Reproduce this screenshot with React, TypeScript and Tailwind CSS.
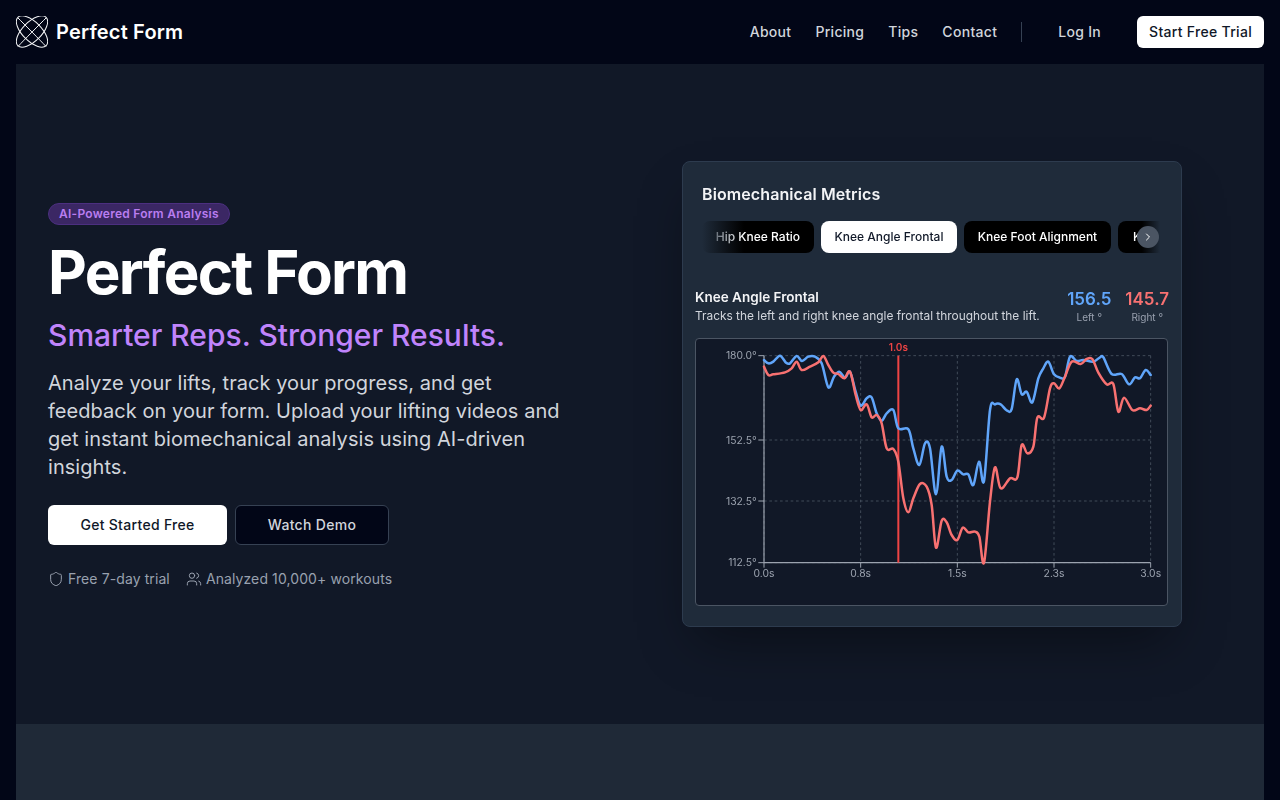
import { Shield, Users, ChevronRight } from "lucide-react";

const blueLine = [
  [222, 75], [235, 85], [250, 80], [270, 62], [288, 83], [300, 85], [320, 63], [336, 78], [355, 65], [375, 65], [395, 85],
  [415, 157], [432, 125], [448, 110], [465, 128], [480, 110], [497, 170], [512, 212], [530, 190], [545, 187], [560, 235],
  [575, 257], [590, 235], [610, 225], [625, 280], [655, 283], [670, 340], [688, 390], [705, 325], [720, 340], [738, 478],
  [755, 335], [770, 425], [785, 435], [802, 407], [820, 418], [835, 418], [850, 450], [867, 380], [882, 438], [900, 225],
  [915, 208], [932, 208], [950, 226], [965, 222], [980, 133], [995, 178], [1010, 170], [1027, 202], [1045, 130], [1060, 100],
  [1075, 80], [1092, 118], [1110, 128], [1125, 125], [1140, 65], [1160, 78], [1180, 75], [1210, 80], [1230, 67], [1240, 67],
  [1265, 117], [1295, 117], [1317, 148], [1335, 127], [1350, 130], [1367, 105], [1382, 120],
];

const redLine = [
  [222, 95], [235, 120], [250, 118], [285, 112], [305, 100], [320, 80], [335, 105], [360, 95], [385, 82], [400, 63], [415, 90],
  [430, 113], [445, 117], [463, 130], [480, 110], [497, 180], [512, 225], [530, 208], [545, 247], [560, 240], [575, 265],
  [590, 340], [610, 342], [625, 380], [640, 490], [655, 532], [670, 490], [690, 447], [710, 455], [725, 510], [738, 638],
  [755, 557], [770, 562], [785, 600], [802, 615], [818, 578], [835, 592], [855, 590], [868, 605], [882, 683], [900, 500],
  [915, 397], [932, 460], [960, 430], [982, 427], [995, 330], [1012, 355], [1030, 335], [1042, 248], [1062, 248], [1080, 160],
  [1092, 145], [1108, 160], [1125, 125], [1145, 80], [1172, 87], [1190, 72], [1207, 72], [1225, 113], [1250, 148], [1270, 147],
  [1285, 230], [1302, 188], [1327, 225], [1350, 220], [1370, 225], [1382, 212],
];

// Catmull-Rom through the sampled points, so the lines stay soft like the chart
function smooth(points: number[][]) {
  let d = `M${points[0][0]} ${points[0][1]}`;
  for (let i = 0; i < points.length - 1; i++) {
    const p0 = points[Math.max(i - 1, 0)];
    const p1 = points[i];
    const p2 = points[i + 1];
    const p3 = points[Math.min(i + 2, points.length - 1)];
    const c1x = p1[0] + (p2[0] - p0[0]) / 6;
    const c1y = p1[1] + (p2[1] - p0[1]) / 6;
    const c2x = p2[0] - (p3[0] - p1[0]) / 6;
    const c2y = p2[1] - (p3[1] - p1[1]) / 6;
    d += ` C${c1x} ${c1y} ${c2x} ${c2y} ${p2[0]} ${p2[1]}`;
  }
  return d;
}

const yTicks = [
  { y: 62, label: "180.0°" },
  { y: 315, label: "152.5°" },
  { y: 498, label: "132.5°" },
  { y: 683, label: "112.5°" },
];

const xTicks = [
  { x: 222, label: "0.0s" },
  { x: 512, label: "0.8s" },
  { x: 802, label: "1.5s" },
  { x: 1092, label: "2.3s" },
  { x: 1382, label: "3.0s" },
];

function Logo() {
  return (
    <svg width="32" height="32" viewBox="0 0 32 32" fill="none" stroke="#f3f4f6" strokeWidth="1">
      <ellipse cx="16" cy="15.5" rx="20" ry="9.5" transform="rotate(45 16 15.5)" />
      <ellipse cx="16" cy="15.5" rx="20" ry="9.5" transform="rotate(-45 16 15.5)" />
      <path d="M2 2C8 8 24 24 30 30.5M30 2C24 8 8 24 2 30.5" />
    </svg>
  );
}

function Chart() {
  return (
    <svg className="block h-full w-full" viewBox="18 12 1413 798" fontFamily="Inter, sans-serif">
      {yTicks.map(({ y }) => (
        <line key={y} x1="222" x2="1382" y1={y} y2={y} stroke="#4b5563" strokeWidth="2.5" strokeDasharray="8 8" />
      ))}
      {xTicks.map(({ x }) => (
        <line key={x} x1={x} x2={x} y1="62" y2="683" stroke="#4b5563" strokeWidth="2.5" strokeDasharray="8 8" />
      ))}
      <path d="M222 62V683H1382" fill="none" stroke="#9ca3af" strokeWidth="3.5" />
      {yTicks.map(({ y, label }) => (
        <g key={label}>
          <line x1="205" x2="222" y1={y} y2={y} stroke="#9ca3af" strokeWidth="3" />
          <text x="200" y={y + 11} textAnchor="end" fontSize="31" fill="#9ca3af">
            {label}
          </text>
        </g>
      ))}
      {xTicks.map(({ x, label }) => (
        <g key={label}>
          <line x1={x} x2={x} y1="683" y2="698" stroke="#9ca3af" strokeWidth="3" />
          <text x={x} y="726" textAnchor="middle" fontSize="31" fill="#9ca3af">
            {label}
          </text>
        </g>
      ))}
      <line x1="625" x2="625" y1="62" y2="683" stroke="#ef4444" strokeWidth="6" />
      <text x="625" y="49" textAnchor="middle" fontSize="30" fontWeight="600" fill="#ef4444">
        1.0s
      </text>
      <path d={smooth(blueLine)} fill="none" stroke="#60a5fa" strokeWidth="7.5" strokeLinejoin="round" strokeLinecap="round" />
      <path d={smooth(redLine)} fill="none" stroke="#f87171" strokeWidth="7.5" strokeLinejoin="round" strokeLinecap="round" />
    </svg>
  );
}

function MetricsCard() {
  return (
    <div className="h-[466px] w-[500px] rounded-lg border border-[#2d3b4e] bg-[#1f2b3a] p-3 shadow-2xl shadow-black/40 blur-[0.35px]">
      <h3 className="mt-2 ml-[7px] text-base leading-6 font-semibold tracking-[0.1px] text-gray-100">Biomechanical Metrics</h3>
      <div className="relative mt-[15px] mr-[9px] ml-[7px] flex h-8 gap-[7px] overflow-hidden text-xs font-medium">
        <span className="flex h-8 w-[112px] shrink-0 items-center justify-end rounded-lg bg-black pr-[14px] text-white">Hip Knee Ratio</span>
        <span className="flex h-8 w-[136px] shrink-0 items-center justify-center rounded-lg bg-white text-gray-900">Knee Angle Frontal</span>
        <span className="flex h-8 w-[147px] shrink-0 items-center justify-center rounded-lg bg-black text-white">Knee Foot Alignment</span>
        <span className="flex h-8 w-[147px] shrink-0 items-center rounded-lg bg-black pl-[15px] text-white">Kn</span>
        <span className="absolute inset-y-0 left-0 w-[42px] bg-gradient-to-r from-[#1f2b3a] to-transparent" />
        <span className="absolute inset-y-0 right-0 w-[18px] bg-gradient-to-l from-[#1f2b3a] to-transparent" />
        <span className="absolute top-[5px] right-px flex size-[22px] items-center justify-center rounded-full bg-[#4b5563] text-white">
          <ChevronRight size={12} />
        </span>
      </div>
      <div className="mt-[34px] flex h-[47px] items-start justify-between">
        <div>
          <div className="text-[13.5px] leading-5 font-semibold text-gray-100">Knee Angle Frontal</div>
          <div className="mt-px text-[11.9px] leading-4 text-gray-300">Tracks the left and right knee angle frontal throughout the lift.</div>
        </div>
        <div className="flex gap-[14px] text-center">
          <div>
            <div className="text-[17px] leading-6 font-semibold text-[#60a5fa]">156.5</div>
            <div className="-mt-0.5 text-[10px] leading-4 text-gray-400">Left °</div>
          </div>
          <div>
            <div className="text-[17px] leading-6 font-semibold text-[#f87171]">145.7</div>
            <div className="-mt-0.5 text-[10px] leading-4 text-gray-400">Right °</div>
          </div>
        </div>
      </div>
      <div className="mt-1 h-[268px] w-[473px] rounded border border-[#4b5563] bg-[#111827]">
        <Chart />
      </div>
    </div>
  );
}

export default function App() {
  const navItems = ["About", "Pricing", "Tips", "Contact"];

  return (
    <div className="h-[800px] overflow-hidden bg-[#020617] font-['Inter',sans-serif]">
      <header className="flex h-16 items-center justify-between px-4">
        <a href="#" className="flex items-center gap-2">
          <Logo />
          <span className="text-xl font-semibold tracking-[0.17px] text-white">Perfect Form</span>
        </a>
        <nav className="flex items-center text-sm font-medium tracking-[0.3px] text-gray-300">
          <div className="flex gap-6">
            {navItems.map((item) => (
              <a key={item} href="#">
                {item}
              </a>
            ))}
          </div>
          <div className="mx-6 h-5 w-px bg-gray-700" />
          <a href="#" className="mr-9 ml-3">
            Log In
          </a>
          <a href="#" className="flex h-8 items-center rounded-md bg-white px-3 text-gray-900">
            Start Free Trial
          </a>
        </nav>
      </header>

      <main className="mx-4">
        <section className="grid h-[660px] grid-cols-[584px_600px] items-center bg-[#111827] px-8">
          <div>
            <span className="inline-block rounded-full border border-[#4c2f80] bg-[#3b2764] px-[10px] text-xs leading-5 font-semibold tracking-[0.25px] text-[#b97df0]">
              AI-Powered Form Analysis
            </span>
            <h1 className="mt-[13px] text-6xl leading-[1.15] font-bold tracking-[-1.67px] text-white">Perfect Form</h1>
            <p className="mt-[10px] text-3xl leading-9 font-[450] text-[#c084fc]">Smarter Reps. Stronger Results.</p>
            <p className="mt-4 max-w-[520px] text-xl leading-7 tracking-[0.05px] text-gray-300">
              Analyze your lifts, track your progress, and get feedback on your form. Upload your lifting videos and get instant biomechanical analysis using AI-driven insights.
            </p>
            <div className="mt-6 flex gap-2 text-sm font-medium tracking-[0.3px]">
              <a href="#" className="flex h-10 w-[179px] items-center justify-center rounded-md bg-white text-gray-900">
                Get Started Free
              </a>
              <a href="#" className="flex h-10 w-[154px] items-center justify-center rounded-md border border-gray-700 bg-[#020617] text-gray-300">
                Watch Demo
              </a>
            </div>
            <div className="mt-6 flex gap-4 text-sm leading-5 tracking-[0.1px] text-gray-400">
              <span className="flex items-center gap-1">
                <Shield size={16} strokeWidth={1.5} />
                Free 7-day trial
              </span>
              <span className="flex items-center gap-1">
                <Users size={16} strokeWidth={1.5} />
                Analyzed 10,000+ workouts
              </span>
            </div>
          </div>
          <div className="flex justify-center">
            <MetricsCard />
          </div>
        </section>
        <section className="h-[76px] bg-[#1f2937]" />
      </main>
    </div>
  );
}
